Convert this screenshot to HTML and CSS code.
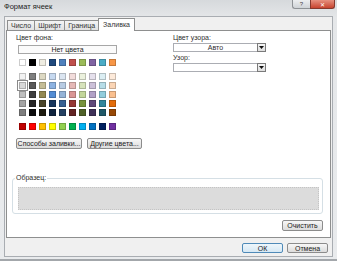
FILE: index.html
```html
<!DOCTYPE html>
<html lang="ru">
<head>
<meta charset="UTF-8">
<title>Формат ячеек</title>
<link rel="stylesheet" href="styles.css">
</head>
<body>

<div class="window">
    <div class="titlebar">
        <span class="title">Формат ячеек</span>
        <div class="caption-btns">
            <span class="btn-help">?</span>
            <span class="btn-close">✕</span>
        </div>
    </div>

    <div class="client">
        <div class="tabs">
            <div class="tab">Число</div>
            <div class="tab">Шрифт</div>
            <div class="tab">Граница</div>
            <div class="tab active">Заливка</div>
        </div>

        <div class="panel">
            <div class="cols">
                <div class="col-left">
                    <div class="label">Цвет фона:</div>
                    <button class="btn no-color">Нет цвета</button>
                    <div class="palette">
                        <div class="swatch-row" id="baseRow"></div>
                        <div class="theme" id="themeRows"></div>
                        <div class="swatch-row standard" id="standardRow"></div>
                    </div>
                    <div class="btn-row">
                        <button class="btn fill-effects">Способы заливки...</button>
                        <button class="btn more-colors">Другие цвета...</button>
                    </div>
                </div>
                <div class="col-right">
                    <div class="label">Цвет узора:</div>
                    <div class="select">
                        <span class="select-value">Авто</span>
                        <span class="select-arrow"><svg width="5" height="3" viewBox="0 0 5 3"><path d="M0 0h5L2.5 3z" fill="#111"/></svg></span>
                    </div>
                    <div class="label gap">Узор:</div>
                    <div class="select">
                        <span class="select-value"></span>
                        <span class="select-arrow"><svg width="5" height="3" viewBox="0 0 5 3"><path d="M0 0h5L2.5 3z" fill="#111"/></svg></span>
                    </div>
                </div>
            </div>

            <fieldset class="sample">
                <legend>Образец:</legend>
                <div class="sample-box"></div>
            </fieldset>

            <div class="clear-row">
                <button class="btn clear">Очистить</button>
            </div>
        </div>

        <div class="footer">
            <button class="btn ok">ОК</button>
            <button class="btn cancel">Отмена</button>
        </div>
    </div>
</div>

<script>
    const base = ['#ffffff', '#000000', '#eeece1', '#1f497d', '#4f81bd', '#c0504d', '#9bbb59', '#8064a2', '#4bacc6', '#f79646'];
    const theme = [
        ['#f2f2f2', '#7f7f7f', '#ddd9c3', '#c6d9f0', '#dbe5f1', '#f2dcdb', '#ebf1dd', '#e5e0ec', '#dbeef3', '#fdeada'],
        ['#d8d8d8', '#595959', '#c4bd97', '#8db3e2', '#b8cce4', '#e5b9b7', '#d7e3bc', '#ccc1d9', '#b7dde8', '#fbd5b5'],
        ['#bfbfbf', '#3f3f3f', '#938953', '#548dd4', '#95b3d7', '#d99694', '#c3d69b', '#b2a2c7', '#92cddc', '#fac08f'],
        ['#a5a5a5', '#262626', '#494429', '#17365d', '#366092', '#953734', '#76923c', '#5f497a', '#31859b', '#e36c09'],
        ['#7f7f7f', '#0c0c0c', '#1d1b10', '#0f243e', '#244061', '#632423', '#4f6128', '#3f3158', '#205867', '#974806']
    ];
    const standard = ['#c00000', '#ff0000', '#ffc000', '#ffff00', '#92d050', '#00b050', '#00b0f0', '#0070c0', '#002060', '#7030a0'];

    function fillRow(row, colors) {
        colors.forEach(function (c) {
            const s = document.createElement('span');
            s.className = 'swatch';
            s.style.background = c;
            row.appendChild(s);
        });
    }

    fillRow(document.getElementById('baseRow'), base);
    fillRow(document.getElementById('standardRow'), standard);

    const themeBox = document.getElementById('themeRows');
    theme.forEach(function (colors) {
        const row = document.createElement('div');
        row.className = 'swatch-row';
        fillRow(row, colors);
        themeBox.appendChild(row);
    });
    // selected colour
    themeBox.children[1].children[0].classList.add('selected');
</script>

</body>
</html>
```

FILE: styles.css
```css
* {
    box-sizing: border-box;
}
body {
    margin: 0;
    font-family: "Liberation Sans", Arial, sans-serif;
    font-size: 7px;
    color: #2e2e2e;
    background: #d8dadd;
}
.window {
    width: 337px;
    height: 261px;
    background: linear-gradient(#d6d9dc, #e5e7e9 18px, #e9ebed);
    border-bottom: 2px solid #a3a7ab;
}

/* title bar */
.titlebar {
    height: 16px;
    display: flex;
    justify-content: space-between;
    align-items: flex-start;
}
.title {
    padding: 3px 0 0 4px;
    font-size: 7.5px;
    line-height: 8px;
    color: #222;
}
.caption-btns {
    display: flex;
    margin-right: 2px;
}
.btn-help,
.btn-close {
    height: 9px;
    display: flex;
    align-items: center;
    justify-content: center;
    font-size: 6px;
    border: 1px solid #8e9296;
    border-top: none;
}
.btn-help {
    width: 18px;
    background: linear-gradient(#eceef0, #cfd3d7);
    color: #444;
    border-radius: 0 0 0 3px;
    border-right: none;
}
.btn-close {
    width: 25px;
    background: linear-gradient(#e6907f, #c8442f);
    color: #fff;
    border-color: #86392d;
    border-radius: 0 0 3px 0;
}

/* client area */
.client {
    margin-left: 4px;
    width: 329px;
    height: 241px;
    background: #f0f0f0;
    border: 1px solid #a9adb2;
    padding-top: 1px;
}
.tabs {
    display: flex;
    align-items: flex-end;
    height: 12px;
    padding-left: 2px;
}
.tab {
    height: 10px;
    line-height: 9px;
    padding: 0 3px;
    border: 1px solid #8e8f8f;
    border-bottom: none;
    margin-right: -1px;
    background: linear-gradient(#f4f4f4, #e1e1e1);
    color: #333;
}
.tab.active {
    height: 13px;
    line-height: 11px;
    margin-bottom: -1px;
    padding: 0 4px;
    background: #fff;
    position: relative;
    z-index: 1;
}
.panel {
    width: 325px;
    height: 208px;
    margin-left: 1px;
    background: #fff;
    border: 1px solid #8e8f8f;
    padding: 3px 0 0 5px;
}
.cols {
    display: flex;
    padding-left: 4px;
}
.col-left {
    width: 157px;
}
.col-right {
    width: 93px;
}
.label {
    line-height: 8px;
    height: 8px;
}
.label.gap {
    margin-top: 2px;
}

/* buttons */
.btn {
    font-family: inherit;
    font-size: 7px;
    color: #222;
    padding: 0;
    border: 1px solid #8c8c8c;
    border-radius: 2px;
    background: linear-gradient(#f7f7f7, #e9e9e9 50%, #dcdcdc);
    line-height: 8px;
}
.no-color {
    display: block;
    margin: 3px 0 0 2px;
    width: 99px;
    height: 9px;
    line-height: 7px;
    background: #fbfbfb;
    border-color: #a7a7a7;
    border-radius: 0;
}

/* palette */
.palette {
    margin-top: 5px;
    padding-left: 3px;
}
.swatch-row {
    display: flex;
    gap: 3px;
}
.swatch {
    width: 7px;
    height: 7px;
    border: 1px solid rgba(0, 0, 0, 0.2);
}
.swatch.selected {
    outline: 1px solid #8a8a8a;
    outline-offset: 1px;
}
.theme {
    margin-top: 7px;
    display: flex;
    flex-direction: column;
    gap: 2px;
}
.standard {
    margin-top: 7px;
}
.btn-row {
    display: flex;
    gap: 5px;
    margin-top: 8px;
}
.fill-effects {
    width: 66px;
    height: 11px;
}
.more-colors {
    width: 55px;
    height: 11px;
}

/* dropdowns */
.select {
    display: flex;
    height: 9px;
    margin-top: 1px;
    border: 1px solid #abadb3;
    background: #fff;
}
.select-value {
    flex: 1;
    text-align: center;
    line-height: 7px;
}
.select-arrow {
    width: 9px;
    display: flex;
    align-items: center;
    justify-content: center;
    border: 1px solid #7a7a7a;
    margin: -1px -1px -1px 0;
    background: linear-gradient(#f5f5f5, #dedede);
}

/* sample */
.sample {
    margin: 25px 0 0;
    width: 311px;
    min-width: 0;
    border: 1px solid #d5dfe5;
    border-radius: 3px;
    padding: 5px 3px 3px 5px;
}
.sample legend {
    padding: 0 1px;
    margin-left: -3px;
    line-height: 8px;
}
.sample-box {
    height: 23px;
    background: #dcdcdc;
    border: 1px dotted #c4c4c4;
}
.clear-row {
    width: 311px;
    display: flex;
    justify-content: flex-end;
    margin-top: 6px;
}
.clear {
    width: 41px;
    height: 11px;
}

/* footer */
.footer {
    display: flex;
    justify-content: flex-end;
    gap: 4px;
    padding-right: 4px;
    margin-top: 5px;
}
.ok,
.cancel {
    width: 41px;
    height: 10px;
    line-height: 7px;
}
.ok {
    border-color: #4f8ab8;
    background: linear-gradient(#eef6fb, #d6e8f4);
}
```
